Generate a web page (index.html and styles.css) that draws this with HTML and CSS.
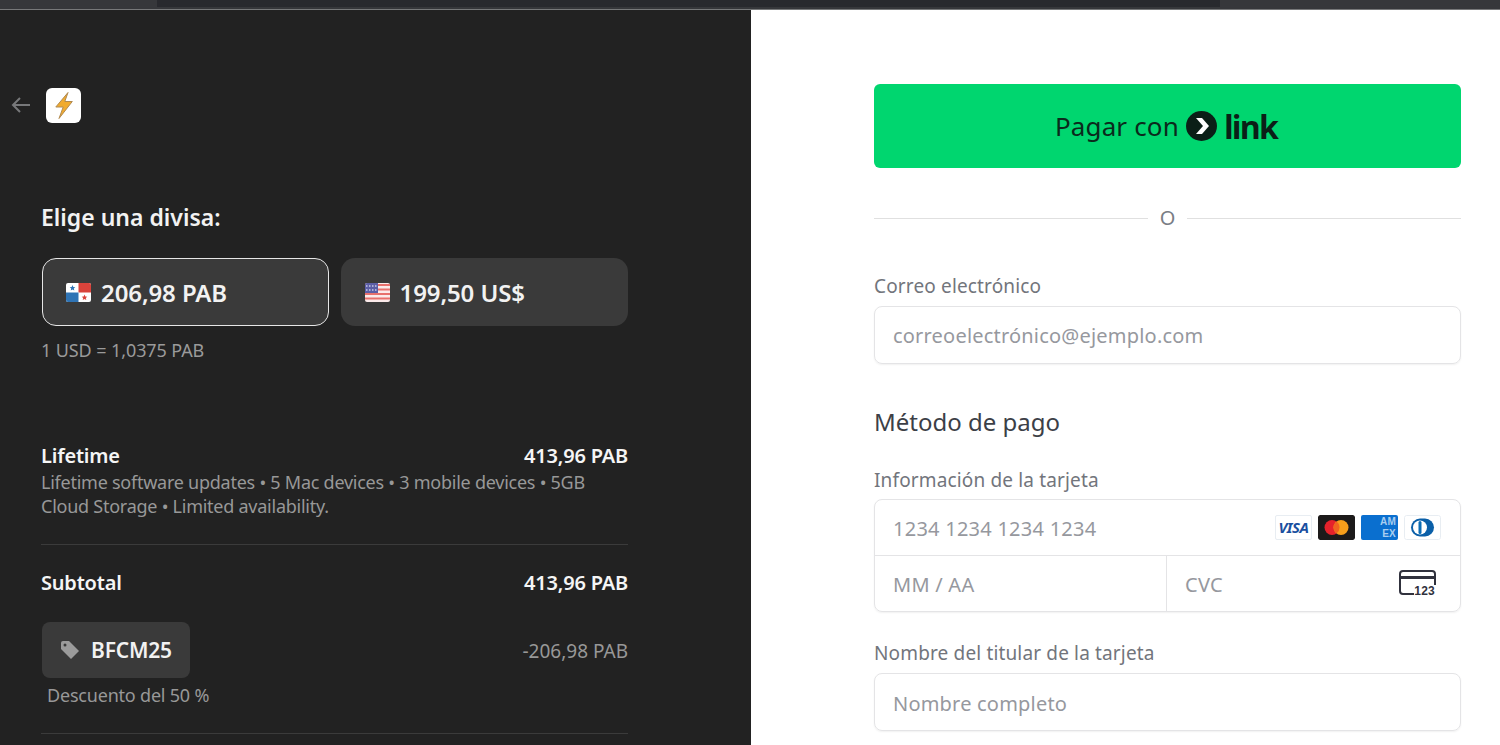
FILE: index.html
```html
<!DOCTYPE html>
<html lang="es">

<head>
    <meta charset="utf-8">
    <title>Pagar</title>
    <link rel="stylesheet" href="styles.css">
</head>

<body>
    <div class="topbar"><div class="topbar-tab"></div></div>
    <div class="checkout">
        <section class="summary">
            <div class="brand">
                <svg class="back" width="19" height="16" viewBox="0 0 19 16" fill="none" stroke="#77787a" stroke-width="2"><path d="M19 8H2M9 1L2 8l7 7"/></svg>
                <div class="logo">
                    <svg width="18" height="27" viewBox="0 0 18 27"><path d="M13 .5L.8 15h7.400L4 26.500 17.300 9.500H9.800z" fill="#f1ab2e" stroke="#b08a52" stroke-width="1"/></svg>
                </div>
            </div>

            <h2 class="currency-title">Elige una divisa:</h2>
            <div class="currencies">
                <div class="currency selected">
                    <svg class="flag" width="25" height="19" viewBox="0 0 25 19">
                        <rect width="25" height="19" rx="2" fill="#fff"/>
                        <path d="M12.500 0H23a2 2 0 0 1 2 2v7.500H12.500z" fill="#d9433b"/>
                        <path d="M0 9.500h12.500V19H2a2 2 0 0 1-2-2z" fill="#2f74b5"/>
                        <path d="M6.500 2l.8 2 2 .2-1.500 1.400.5 2-1.800-1.100-1.800 1.100.5-2-1.500-1.400 2-.2z" fill="#2f74b5"/>
                        <path d="M18.500 11.500l.8 2 2 .2-1.500 1.400.5 2-1.800-1.100-1.800 1.100.5-2-1.500-1.400 2-.2z" fill="#d9433b"/>
                    </svg>
                    <span>206,98 PAB</span>
                </div>
                <div class="currency">
                    <svg class="flag" width="25" height="19" viewBox="0 0 25 19">
                        <rect width="25" height="19" rx="2" fill="#fbeaea"/>
                        <path d="M0 2h25M0 6.500h25M0 11h25M0 15.500h25" stroke="#e8706c" stroke-width="2"/>
                        <path d="M2 0h11v10H0V2a2 2 0 0 1 2-2z" fill="#5b5ea6"/>
                        <path d="M1 3h11M1 7h11" stroke="#c9cbe8" stroke-width="1.500" stroke-dasharray="1.500 1.500"/>
                    </svg>
                    <span>199,50 US$</span>
                </div>
            </div>
            <p class="rate">1 USD = 1,0375 PAB</p>

            <div class="line-item">
                <div class="row">
                    <span class="strong">Lifetime</span>
                    <span class="strong">413,96 PAB</span>
                </div>
                <p class="item-desc">Lifetime software updates • 5 Mac devices • 3 mobile devices • 5GB Cloud Storage • Limited availability.</p>
            </div>

            <div class="totals">
                <div class="row">
                    <span class="strong">Subtotal</span>
                    <span class="strong">413,96 PAB</span>
                </div>
                <div class="row promo-row">
                    <div class="promo">
                        <svg width="20" height="20" viewBox="0 0 20 20"><path d="M1 3a2 2 0 0 1 2-2h6l10 10-8 8L1 9z" fill="#9b9b9b"/><circle cx="5" cy="5" r="1.500" fill="#3a3a3a"/></svg>
                        <span>BFCM25</span>
                    </div>
                    <span class="discount">-206,98 PAB</span>
                </div>
                <p class="promo-note">Descuento del 50 %</p>
            </div>
        </section>

        <section class="payment">
            <button class="link-btn">
                <span>Pagar con</span>
                <svg width="31" height="30" viewBox="0 0 31 30"><ellipse cx="15.500" cy="15" rx="15.500" ry="15" fill="#0b1f17"/><path d="M10 7h6l7 8-7 8h-6l7-8z" fill="#fff"/></svg>
                <b>link</b>
            </button>
            <div class="divider"><span>O</span></div>

            <label class="field-label">Correo electrónico</label>
            <div class="input"><span>correoelectrónico@ejemplo.com</span></div>

            <h3 class="method-title">Método de pago</h3>

            <label class="field-label">Información de la tarjeta</label>
            <div class="card-box">
                <div class="card-number">
                    <span class="card-text">1234 1234 1234 1234</span>
                    <div class="brands">
                        <div class="brand-card visa">VISA</div>
                        <svg class="brand-card" width="37" height="25" viewBox="0 0 37 25"><rect width="37" height="25" rx="2" fill="#1c1a1a"/><circle cx="14" cy="12.500" r="7.500" fill="#e5222b"/><circle cx="23" cy="12.500" r="7.500" fill="#f79e1b"/><path d="M18.500 6.500a7.500 7.500 0 0 1 0 12 7.500 7.500 0 0 1 0-12z" fill="#f0641f"/></svg>
                        <div class="brand-card amex">AM<br>EX</div>
                        <svg class="brand-card" width="37" height="25" viewBox="0 0 37 25"><rect x=".5" y=".5" width="36" height="24" rx="2" fill="#fff" stroke="#e8edf2"/><rect x="7" y="3.500" width="23" height="18" rx="9" fill="#0a5fa8"/><circle cx="16" cy="12.500" r="7" fill="#fff"/><rect x="14.500" y="6" width="3" height="13" rx="1.500" fill="#0a6cb4"/></svg>
                    </div>
                </div>
                <div class="card-bottom">
                    <div class="card-cell"><span class="card-text">MM / AA</span></div>
                    <div class="card-cell">
                        <span class="card-text">CVC</span>
                        <svg width="37" height="27" viewBox="0 0 37 27" fill="none">
                            <path d="M15 24H4a3 3 0 0 1-3-3V4a3 3 0 0 1 3-3h29a3 3 0 0 1 3 3v11" stroke="#30313d" stroke-width="2"/>
                            <rect x="1" y="6" width="35" height="3" fill="#30313d"/>
                            <text x="36" y="25" text-anchor="end" class="cvc-digits">123</text>
                        </svg>
                    </div>
                </div>
            </div>

            <label class="field-label holder-label">Nombre del titular de la tarjeta</label>
            <div class="input holder-input"><span>Nombre completo</span></div>
        </section>
    </div>
</body>

</html>
```

FILE: styles.css
```css
html,
body {
    margin: 0;
    height: 745px;
    overflow: hidden;
}

body {
    font-family: "Noto Sans", sans-serif;
    background: #fff;
    display: flex;
    flex-direction: column;
}

.topbar {
    height: 9px;
    background: #36373b;
    border-bottom: 1px solid #77787a;
    padding-left: 157px;
    flex-shrink: 0;
}

.topbar-tab {
    width: 1063px;
    height: 7px;
    background: #28292e;
}

.checkout {
    flex: 1;
    display: flex;
    min-height: 0;
}

/* left panel */
.summary {
    width: 587px;
    padding: 0 123px 0 41px;
    background: #222222;
    color: #fff;
    overflow: hidden;
    flex-shrink: 0;
}

.brand {
    display: flex;
    align-items: center;
    gap: 16px;
    margin: 78px 0 0 -30px;
}

.back {
    margin-bottom: 2px;
}

.logo {
    width: 35px;
    height: 35px;
    border-radius: 6px;
    background: #fff;
    display: flex;
    align-items: center;
    justify-content: center;
}

.currency-title {
    margin: 78px 0 0;
    font-size: 23px;
    line-height: 32px;
    font-weight: 600;
    color: #f2f2f2;
}

.currencies {
    display: grid;
    grid-template-columns: 1fr 1fr;
    gap: 12px;
    margin-top: 25px;
}

.currency {
    height: 68px;
    box-sizing: border-box;
    padding-left: 24px;
    display: flex;
    align-items: center;
    gap: 10px;
    background: #3a3a3a;
    border-radius: 14px;
    font-size: 24px;
    font-weight: 600;
    letter-spacing: -0.1px;
    color: #f2f2f2;
}

.currency.selected {
    margin-left: 1px;
    padding-left: 23px;
    border: 1.500px solid #e6e6e6;
}

.rate {
    margin: 12px 0 0;
    font-size: 18px;
    line-height: 24px;
    letter-spacing: -0.1px;
    color: #9a9a9a;
}

.row {
    display: flex;
    justify-content: space-between;
    align-items: center;
}

.strong {
    font-size: 20px;
    line-height: 26px;
    font-weight: 600;
    letter-spacing: -0.2px;
    color: #f5f5f5;
}

.line-item {
    margin-top: 81px;
    padding-bottom: 26px;
    border-bottom: 1px solid #3b3b3b;
}

.item-desc {
    margin: 1px 0 0;
    font-size: 18px;
    line-height: 24px;
    letter-spacing: -0.25px;
    color: #989898;
}

.totals {
    padding-top: 25px;
    padding-bottom: 26px;
    border-bottom: 1px solid #3b3b3b;
}

.promo-row {
    margin-top: 26px;
}

.promo {
    height: 56px;
    width: 148px;
    box-sizing: border-box;
    margin-left: 1px;
    padding-left: 18px;
    display: flex;
    align-items: center;
    gap: 11px;
    background: #3a3a3a;
    border-radius: 8px;
    font-size: 21px;
    font-weight: 600;
    letter-spacing: -0.2px;
    color: #f2f2f2;
}

.discount {
    margin-top: 2px;
    font-size: 19px;
    color: #989898;
}

.promo-note {
    margin: 5px 0 0 6px;
    font-size: 18px;
    line-height: 24px;
    letter-spacing: -0.2px;
    color: #989898;
}

/* right panel */
.payment {
    flex: 1;
    padding: 74px 39px 0 123px;
    overflow: hidden;
}

.link-btn {
    width: 100%;
    height: 84px;
    border: 0;
    border-radius: 6px;
    background: #00d66f;
    color: #0b2a1c;
    display: flex;
    align-items: center;
    justify-content: center;
    gap: 7px;
    font-family: "Noto Sans", sans-serif;
    font-size: 26px;
    letter-spacing: 0.15px;
}

.link-btn b {
    margin-right: 3px;
    font-family: "Open Sans", sans-serif;
    font-size: 32px;
    font-weight: 700;
    letter-spacing: -1.800px;
    color: #0b1f17;
}

.divider {
    display: flex;
    align-items: center;
    gap: 12px;
    margin-top: 38px;
    font-size: 20px;
    line-height: 24px;
    color: #7a7d85;
}

.divider::before,
.divider::after {
    content: "";
    flex: 1;
    height: 1px;
    background: #e0e0e0;
}

.field-label {
    display: block;
    font-size: 19px;
    line-height: 26px;
    letter-spacing: 0.15px;
    color: #72757c;
}

.divider + .field-label {
    margin-top: 43px;
}

.input {
    height: 58px;
    box-sizing: border-box;
    margin-top: 7px;
    padding-left: 18px;
    display: flex;
    align-items: center;
    border: 1px solid #e4e4e6;
    border-radius: 8px;
    box-shadow: 0 1px 2px rgba(0, 0, 0, 0.06);
    font-size: 20px;
    letter-spacing: 0.2px;
    color: #96989e;
}

.method-title {
    margin: 42px 0 29px;
    font-size: 24px;
    line-height: 32px;
    font-weight: 400;
    color: #3c3f47;
}

.card-box {
    margin-top: 6px;
    border: 1px solid #e4e4e6;
    border-radius: 8px;
    box-shadow: 0 1px 2px rgba(0, 0, 0, 0.06);
    font-size: 20px;
    letter-spacing: 0.25px;
    color: #96989e;
}

.card-number {
    height: 55px;
    padding: 0 19px 0 18px;
    display: flex;
    align-items: center;
    justify-content: space-between;
    border-bottom: 1px solid #e4e4e6;
}

.card-text {
    padding-top: 2px;
}

.brands {
    display: flex;
    gap: 6px;
}

.brand-card {
    width: 37px;
    height: 25px;
    box-sizing: border-box;
    border-radius: 2px;
    display: block;
}

.visa {
    border: 1px solid #e8edf2;
    color: #1a4fa0;
    font: italic 700 15px/23px "Noto Sans", sans-serif;
    letter-spacing: -0.5px;
    text-align: center;
}

.amex {
    background: #0a6fcf;
    color: #a8cdf0;
    font: 700 10px/12px "Liberation Sans", sans-serif;
    padding: 1px 2px 0 0;
    text-align: right;
}

.card-bottom {
    height: 55px;
    display: grid;
    grid-template-columns: 291px 1fr;
}

.card-cell {
    padding: 0 24px 0 18px;
    display: flex;
    align-items: center;
    justify-content: space-between;
}

.card-cell + .card-cell {
    border-left: 1px solid #e4e4e6;
}

.cvc-digits {
    font: 700 12px "Liberation Sans", sans-serif;
    fill: #30313d;
}

.holder-label {
    margin-top: 28px;
}

.holder-input {
    margin-top: 7px;
    padding-top: 2px;
}
```
